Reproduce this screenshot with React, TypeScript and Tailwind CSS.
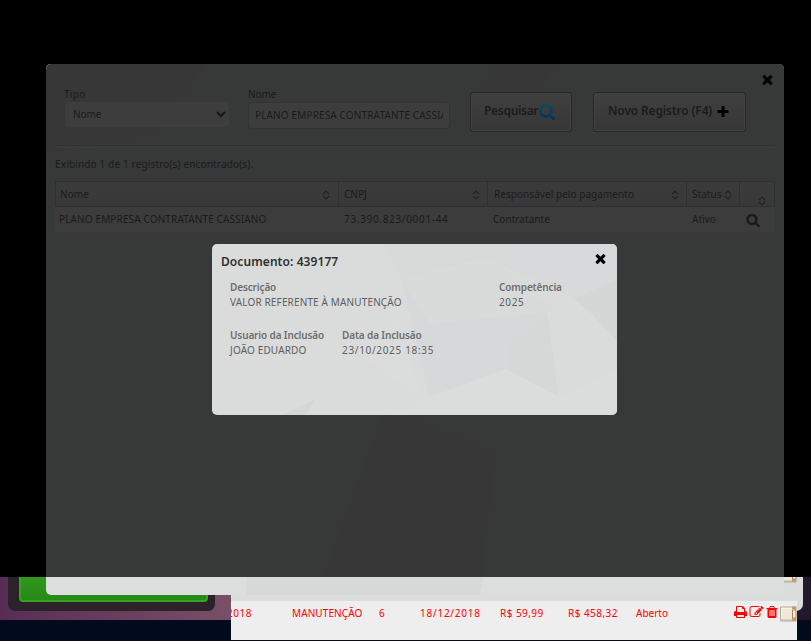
import React from "react";

const PATHS = {
  times: "M1490 1322q0 40-28 68l-136 136q-28 28-68 28t-68-28l-294-294-294 294q-28 28-68 28t-68-28l-136-136q-28-28-28-68t28-68l294-294-294-294q-28-28-28-68t28-68l136-136q28-28 68-28t68 28l294 294 294-294q28-28 68-28t68 28l136 136q28 28 28 68t-28 68l-294 294 294 294q28 28 28 68z",
  plus: "M1600 736v192q0 40-28 68t-68 28h-416v416q0 40-28 68t-68 28h-192q-40 0-68-28t-28-68v-416h-416q-40 0-68-28t-28-68v-192q0-40 28-68t68-28h416v-416q0-40 28-68t68-28h192q40 0 68 28t28 68v416h416q40 0 68 28t28 68z",
  search: "M1216 832q0-185-131.5-316.5t-316.5-131.5-316.5 131.5-131.5 316.5 131.5 316.5 316.5 131.5 316.5-131.5 131.5-316.5zm512 832q0 52-38 90t-90 38q-54 0-90-38l-343-342q-179 124-399 124-143 0-273.5-55.5t-225-150-150-225-55.5-273.5 55.5-273.5 150-225 225-150 273.5-55.5 273.5 55.5 225 150 150 225 55.5 273.5q0 220-124 399l343 343q37 37 37 90z",
  print: "M448 1536h896v-256h-896v256zm0-640h896v-384h-160q-40 0-68-28t-28-68v-160h-640v640zm1152 64q0-26-19-45t-45-19-45 19-19 45 19 45 45 19 45-19 19-45zm128 0v416q0 13-9.5 22.5t-22.5 9.5h-224v160q0 40-28 68t-68 28h-960q-40 0-68-28t-28-68v-160h-224q-13 0-22.5-9.5t-9.5-22.5v-416q0-79 56.5-135.5t135.5-56.5h64v-544q0-40 28-68t68-28h672q40 0 88 20t76 48l152 152q28 28 48 76t20 88v256h64q79 0 135.5 56.5t56.5 135.5z",
  edit: "M888 1184l116-116-152-152-116 116v56h96v96h56zm440-720q-16-16-33 1l-350 350q-17 17-1 33t33-1l350-350q17-17 1-33zm80 594v190q0 119-84.5 203.5t-203.5 84.5h-832q-119 0-203.5-84.5t-84.5-203.5v-832q0-119 84.5-203.5t203.5-84.5h832q63 0 117 25 15 7 18 23 3 17-9 29l-49 49q-14 14-32 8-23-6-45-6h-832q-66 0-113 47t-47 113v832q0 66 47 113t113 47h832q66 0 113-47t47-113v-126q0-13 9-22l64-64q15-15 35-7t20 29zm-96-738l288 288-672 672h-288v-288zm444 132l-92 92-288-288 92-92q28-28 68-28t68 28l152 152q28 28 28 68t-28 68z",
  trash: "M704 1376v-704q0-14-9-23t-23-9h-64q-14 0-23 9t-9 23v704q0 14 9 23t23 9h64q14 0 23-9t9-23zm256 0v-704q0-14-9-23t-23-9h-64q-14 0-23 9t-9 23v704q0 14 9 23t23 9h64q14 0 23-9t9-23zm256 0v-704q0-14-9-23t-23-9h-64q-14 0-23 9t-9 23v704q0 14 9 23t23 9h64q14 0 23-9t9-23zm-544-992h448l-48-117q-7-9-17-11h-317q-10 2-17 11zm928 32v64q0 14-9 23t-23 9h-96v948q0 83-47 143.5t-113 60.5h-832q-66 0-113-58.5t-47-141.5v-952h-96q-14 0-23-9t-9-23v-64q0-14 9-23t23-9h309l70-167q15-37 54-63t79-26h320q40 0 79 26t54 63l70 167h309q14 0 23 9t9 23z",
};

function Icon({ name, className, fill = "currentColor" }: { name: keyof typeof PATHS; className: string; fill?: string }) {
  return (
    <svg viewBox="0 0 1792 1792" className={`shrink-0 ${className}`}>
      <defs>
        <linearGradient id="lens" x1="0" y1="0" x2="0" y2="1">
          <stop offset="0" stopColor="#0d4a63" />
          <stop offset="1" stopColor="#0a2f58" />
        </linearGradient>
      </defs>
      <path d={PATHS[name]} fill={fill} stroke={name === "search" ? fill : "none"} strokeWidth="50" />
    </svg>
  );
}

function SortIcon({ className = "" }: { className?: string }) {
  return (
    <svg viewBox="0 0 8 10" className={`h-[10px] w-2 shrink-0 fill-none stroke-[#232323] ${className}`} strokeWidth="1.2">
      <path d="M1 4 4 1l3 3M1 6l3 3 3-3" />
    </svg>
  );
}

function Scroll({ className }: { className: string }) {
  return (
    <svg viewBox="0 0 17 16" className={`h-4 w-[17px] shrink-0 ${className}`}>
      <path d="M.5 1h15v13H.5z" fill="#faf3e5" stroke="#b5aa9a" />
      <path d="M2 4h10M2 6h10M2 8h10M2 10h10M2 12h10" stroke="#ddd2c0" strokeWidth=".7" />
      <path d="M12.500 4h3.500v8h-3.500z" fill="#fbeedd" stroke="#b28461" />
      <path d="M12 .5h4.500v3H12zM12 12h4.500v3H12z" fill="#c49a76" />
      <path d="M0 15h16" stroke="#b5aa9a" />
    </svg>
  );
}

function Header({ label, className, sortClass = "" }: { label: string; className: string; sortClass?: string }) {
  return (
    <div className={`flex h-[26px] items-center justify-between border-y border-r border-[#303030] bg-gradient-to-b from-[#3b3b3b] to-[#383838] pt-px ${className}`}>
      <span className="tracking-[0.05px]">{label}</span>
      <SortIcon className={sortClass} />
    </div>
  );
}

function Field({ label, value, className = "", valueClass = "" }: { label: string; value: string; className?: string; valueClass?: string }) {
  return (
    <div className={`whitespace-nowrap leading-[15px] ${className}`}>
      <div className="font-semibold tracking-[-0.13px] text-[#6e6e6e]">{label}</div>
      <div className={`text-[#5e5e5e] ${valueClass}`}>{value}</div>
    </div>
  );
}

function SearchModal() {
  return (
    <section className="absolute left-[46px] top-16 h-[531px] w-[738px] overflow-hidden rounded-[5px] bg-[#dcdedd]">
      <svg viewBox="0 0 738 531" className="absolute inset-0 h-full w-full">
        <path d="M0 0h160l-50 70L0 90zM450 0h60l-26 50-62-12z" fill="#dadcdb" />
        <path d="M434 531 450 390 340 340l-70 191z" fill="#dadcdb" />
        <path d="M434 531l4-18H200v18z" fill="#d7d9d8" />
        <path d="M0 0h738v513H0z" fill="#000" fillOpacity=".75" />
      </svg>
      <div className="relative h-[513px] px-[9px] text-[#1b1b1b]">
        <Icon name="times" className="absolute left-[714px] top-[8px] h-[15px] w-[15px] text-black" />
        <div className="flex h-[82px] border-b border-[#323232] pl-[9px] pt-[23px]">
          <div className="w-[184px]">
            <div className="h-[15px] leading-[15px] tracking-[0.3px]">Tipo</div>
            <div className="ml-px flex h-[25px] w-[164px] items-center justify-between rounded-sm bg-[#3d3d3d] pl-2 pr-[3px]">
              <span className="tracking-[-0.05px]">Nome</span>
              <svg viewBox="0 0 10 7" className="h-[7px] w-[10px] fill-none stroke-[#161616]" strokeWidth="2"><path d="m1 1 4 4 4-4" /></svg>
            </div>
          </div>
          <div className="w-[222px]">
            <div className="h-[15px] leading-[15px] tracking-[-0.05px]">Nome</div>
            <div className="flex h-[27px] w-[202px] items-center rounded-sm border border-[#333] bg-[#3d3d3d] px-[6px]">
              <span className="w-[189px] overflow-hidden whitespace-nowrap tracking-[0.14px]">PLANO EMPRESA CONTRATANTE CASSIANO</span>
            </div>
          </div>
          <button className="mt-[5px] flex h-10 w-[102px] items-center rounded-[3px] border border-[#272727] bg-gradient-to-b from-[#404040] to-[#363636] pl-[13px] pb-[2px] text-xs font-semibold tracking-[-0.3px] shadow-[inset_0_0_0_1px_#424242]">
            Pesquisar<Icon name="search" fill="url(#lens)" className="h-[17px] w-[18px]" />
          </button>
          <button className="ml-[21px] mt-[5px] flex h-10 w-[153px] items-center whitespace-nowrap rounded-[3px] border border-[#272727] bg-gradient-to-b from-[#404040] to-[#363636] pl-[14px] pb-[2px] text-xs font-semibold tracking-[-0.15px] shadow-[inset_0_0_0_1px_#424242]">
            Novo Registro (F4)<Icon name="plus" className="ml-1 mt-[2px] h-[14px] w-[14px] text-black" />
          </button>
        </div>
        <div className="h-[2px] bg-[#3c3c3c]" />
        <p className="mt-2 h-[25px] leading-[17px] tracking-[0.15px]">Exibindo 1 de 1 registro(s) encontrado(s).</p>
        <div className="flex">
          <Header label="Nome" className="w-[284px] border-l pl-1 pr-2" />
          <Header label="CNPJ" className="w-[149px] pl-[5px] pr-[7px]" />
          <Header label="Responsável pelo pagamento" className="w-[199px] pl-[6px] pr-[7px]" />
          <Header label="Status" className="w-[53px] pl-[5px] pr-[7px]" />
          <Header label="" className="w-[35px] pr-2" sortClass="ml-auto mt-3" />
        </div>
        <div className="flex h-[25px] items-center bg-[#3c3c3c] pl-1">
          <span className="w-[285px] tracking-[0.13px]">PLANO EMPRESA CONTRATANTE CASSIANO</span>
          <span className="w-[149px] tracking-[0.67px]">73.390.823/0001-44</span>
          <span className="w-[199px] tracking-[0.05px]">Contratante</span>
          <span className="w-[54px]">Ativo</span>
          <Icon name="search" className="h-[14px] w-[14px]" />
        </div>
      </div>
    </section>
  );
}

function DocumentDialog() {
  return (
    <section className="absolute left-[212px] top-[244px] h-[171px] w-[405px] overflow-hidden rounded-[5px] bg-[#dadcdb]">
      <svg viewBox="0 0 405 171" className="absolute inset-0 h-full w-full">
        <path d="m172 0 18 37 65-19L300 0z" fill="#d7dad9" />
        <path d="M300 0h105v35l-43 20-82-39-25 2z" fill="#d7d9da" />
        <path d="m190 37 90-21 65 53-127 11z" fill="#d9dbdb" />
        <path d="m190 37 28 118 76-30 41-57-117 12z" fill="#d7d8da" />
        <path d="m335 68-41 31v26l53 28z" fill="#d5d8d6" />
        <path d="m335 68 27-13 43 42v30l-58 26z" fill="#dadcdb" />
        <path d="m405 35-43 20 18 15 25 27z" fill="#d5d7d6" />
        <path d="m212 155 82-30 53 28 58-28v46H185z" fill="#dbdddc" />
        <path d="m70 171 33-16-9 16z" fill="#d4d6d6" />
        <path d="m150 112 60 43-25-78z" fill="#dbdddc" />
      </svg>
      <div className="relative pl-[9px] pt-2">
        <Icon name="times" className="absolute right-[9px] top-[7px] h-[15px] w-[15px] text-black" />
        <h1 className="h-7 text-xs font-semibold leading-5 tracking-[0.08px] text-[#303030]">Documento: 439177</h1>
        <div className="flex h-12 pl-[9px]">
          <Field className="w-[269px]" label="Descrição" value="VALOR REFERENTE À MANUTENÇÃO" valueClass="tracking-[0.14px]" />
          <Field label="Competência" value="2025" valueClass="tracking-[0.6px]" />
        </div>
        <div className="flex pl-[9px]">
          <Field className="w-[112px]" label="Usuario da Inclusão" value="JOÃO EDUARDO" valueClass="tracking-[0.15px]" />
          <Field label="Data da Inclusão" value="23/10/2025 18:35" valueClass="tracking-[0.67px]" />
        </div>
      </div>
    </section>
  );
}

function PageBehind() {
  return (
    <div className="absolute inset-x-0 top-[577px] h-16 overflow-hidden bg-[#020b1d]">
      <div className="h-[43px] bg-gradient-to-r from-[#572d56] via-[#7b5168] via-30% to-[#20182d]" />
      <div className="absolute left-2 top-0 h-[34px] w-[207px] rounded-b-[7px] bg-[#2c2229] pl-[11px]">
        <div className="h-[25px] w-[189px] rounded-b-sm border-2 border-t-0 border-[#36a41f] bg-gradient-to-b from-[#31981e] to-[#278817]" />
      </div>
      <div className="absolute left-[231px] top-0 h-[34px] w-[572px] rounded-br-[7px] bg-[#dbdddc]" />
      <div className="absolute left-[231px] top-6 flex h-[39px] w-[566px] items-center overflow-hidden whitespace-nowrap bg-[#eee] pb-[14px] text-[#f00]">
        <span className="-ml-1 w-[65px] tracking-[0.5px]">2018</span>
        <span className="w-[87px] tracking-[0.1px]">MANUTENÇÃO</span>
        <span className="w-[41px]">6</span>
        <span className="w-[80px] tracking-[0.75px]">18/12/2018</span>
        <span className="w-[68px] tracking-[0.45px]">R$ 59,99</span>
        <span className="w-[68px] tracking-[0.45px]">R$ 458,32</span>
        <span className="w-[97px]">Aberto</span>
        <Icon name="print" className="mb-1 h-[14px] w-[15px]" />
        <Icon name="edit" className="mb-1 ml-px h-[14px] w-[15px]" />
        <Icon name="trash" className="mb-1 ml-px h-[14px] w-[14px]" />
        <Scroll className="ml-px" />
      </div>
      <Scroll className="absolute -top-[10px] left-[780px]" />
    </div>
  );
}

export default function App() {
  return (
    <main className="relative h-[641px] w-[811px] overflow-hidden bg-black font-['Noto_Sans','Open_Sans',sans-serif] text-[10px]">
      <PageBehind />
      <SearchModal />
      <DocumentDialog />
    </main>
  );
}
